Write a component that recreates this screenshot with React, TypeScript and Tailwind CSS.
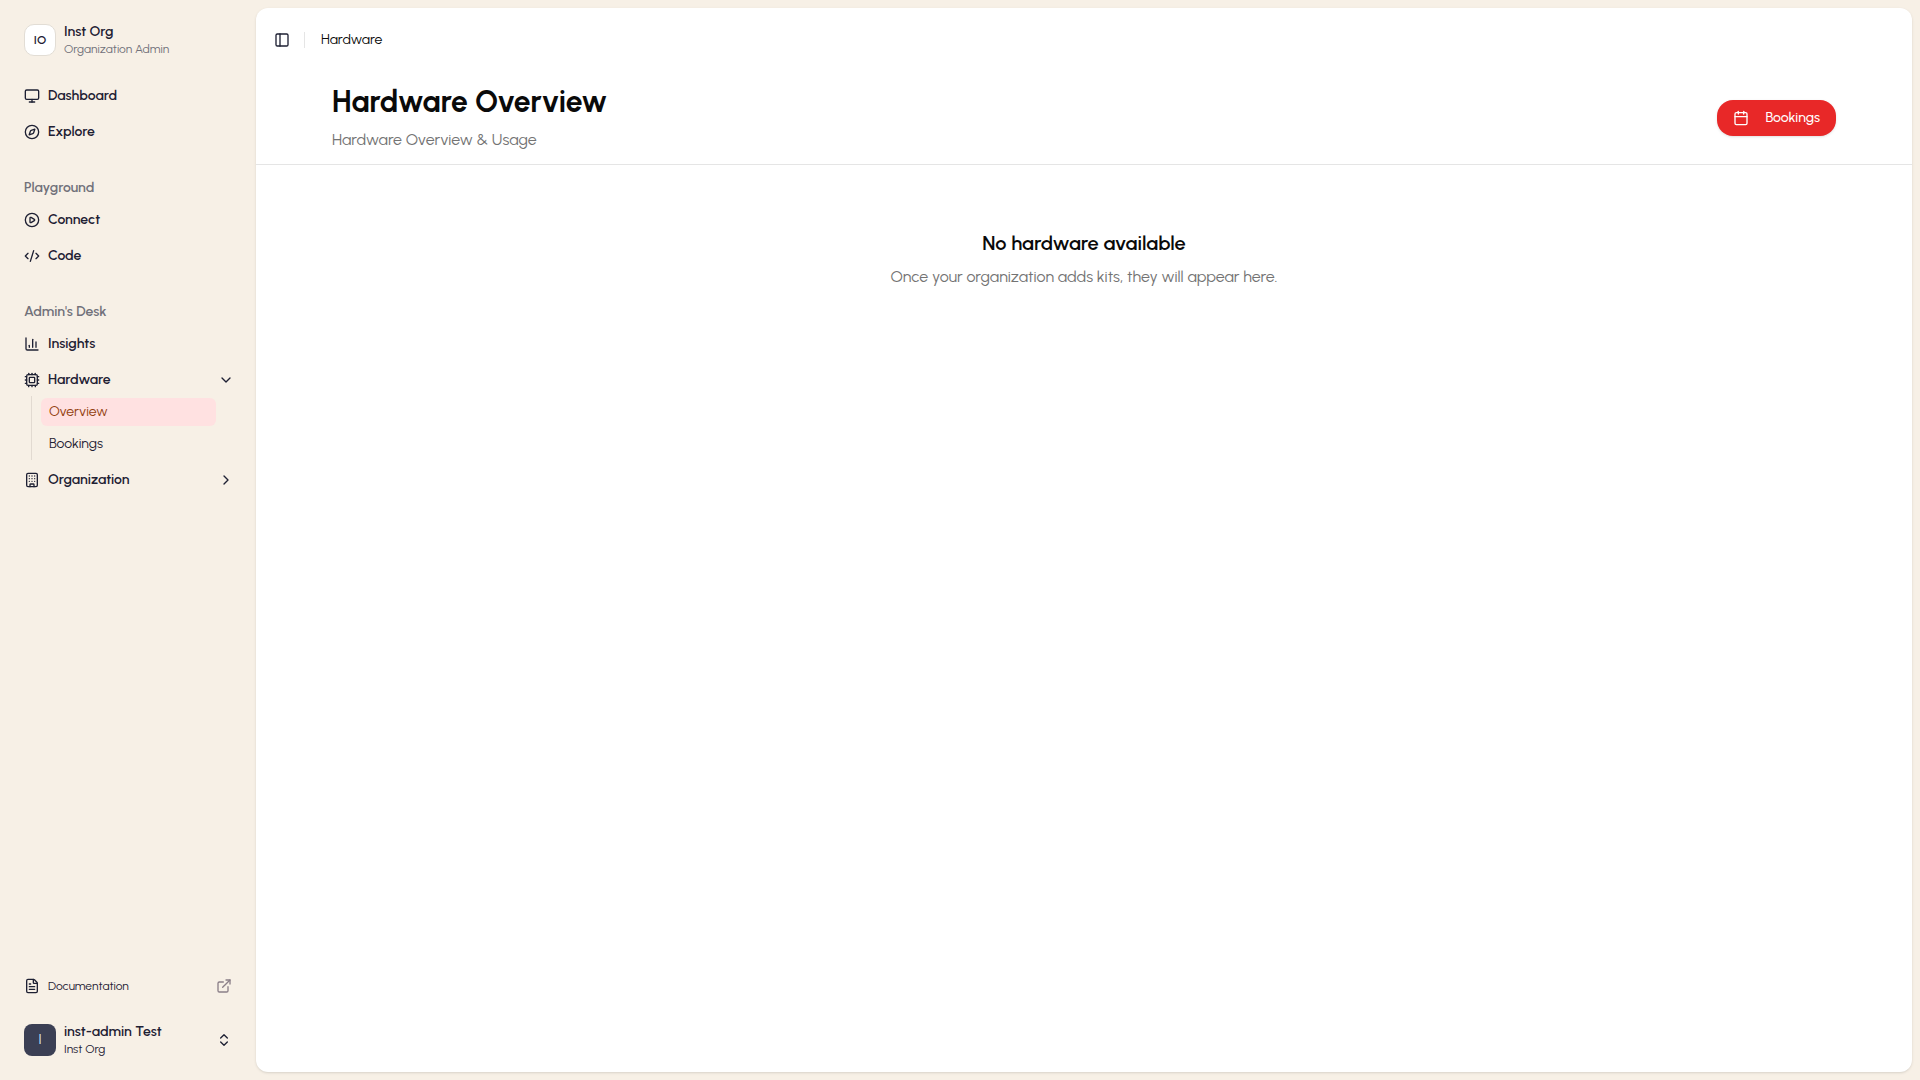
import { useState } from "react";
import {
  Building,
  Calendar,
  ChartColumn,
  ChevronRight,
  ChevronsUpDown,
  CirclePlay,
  CodeXml,
  Compass,
  Cpu,
  ExternalLink,
  FileText,
  Monitor,
  PanelLeft,
  type LucideIcon,
} from "lucide-react";

type NavLinkProps = {
  readonly icon: LucideIcon;
  readonly label: string;
};

type NavSectionProps = {
  readonly icon: LucideIcon;
  readonly label: string;
  readonly items: readonly string[];
  readonly active?: string;
  readonly defaultOpen?: boolean;
};

const NavLink = ({ icon: Icon, label }: NavLinkProps) => (
  <li>
    <a href="#" className="flex h-8 items-center gap-2 rounded-md px-2 font-semibold hover:bg-black/5">
      <Icon className="size-4 shrink-0" />
      <span>{label}</span>
    </a>
  </li>
);

const NavSection = ({ icon: Icon, label, items, active, defaultOpen = false }: NavSectionProps) => {
  const [isOpen, setIsOpen] = useState(defaultOpen);

  return (
    <li>
      <button
        type="button"
        aria-expanded={isOpen}
        onClick={() => setIsOpen((prev) => !prev)}
        className="flex h-8 w-full items-center gap-2 rounded-md px-2 text-left font-semibold hover:bg-black/5"
      >
        <Icon className="size-4 shrink-0" />
        <span className="flex-1">{label}</span>
        <ChevronRight className={`-mr-0.5 size-4 shrink-0 transition-transform ${isOpen ? "rotate-90" : ""}`} />
      </button>
      {isOpen && (
        <ul className="ml-[15px] mr-6 flex flex-col gap-1 border-l border-[#e2dad1] py-0.5 pl-[9px]">
          {items.map((item) => (
            <li key={item}>
              <a
                href="#"
                className={`flex h-7 items-center rounded-md px-2 ${
                  item === active ? "bg-[#ffe1e1] text-[#92400e]" : "hover:bg-black/5"
                }`}
              >
                {item}
              </a>
            </li>
          ))}
        </ul>
      )}
    </li>
  );
};

const GroupLabel = ({ children }: { readonly children: string }) => (
  <h2 className="flex h-8 items-center px-2 font-semibold text-[#71717a]">{children}</h2>
);

const Sidebar = () => (
  <aside className="flex w-64 shrink-0 flex-col p-2 text-sm text-[#1e2033]">
    {/* Organization */}
    <div className="p-2">
      <button type="button" className="flex h-12 w-full items-center gap-2 rounded-md px-2 text-left">
        <span className="flex size-8 shrink-0 items-center justify-center rounded-[10px] border border-[#e2ddd5] bg-white text-xs font-semibold">
          IO
        </span>
        <span className="flex flex-col">
          <span className="text-sm leading-[18px] font-semibold">Inst Org</span>
          <span className="text-xs leading-4 text-[#71717a]">Organization Admin</span>
        </span>
      </button>
    </div>

    {/* Navigation */}
    <nav className="flex flex-1 flex-col gap-2">
      <ul className="flex flex-col gap-1 p-2">
        <NavLink icon={Monitor} label="Dashboard" />
        <NavLink icon={Compass} label="Explore" />
      </ul>
      <div className="p-2">
        <GroupLabel>Playground</GroupLabel>
        <ul className="flex flex-col gap-1">
          <NavLink icon={CirclePlay} label="Connect" />
          <NavLink icon={CodeXml} label="Code" />
        </ul>
      </div>
      <div className="p-2">
        <GroupLabel>Admin's Desk</GroupLabel>
        <ul className="flex flex-col gap-1">
          <NavLink icon={ChartColumn} label="Insights" />
          <NavSection
            icon={Cpu}
            label="Hardware"
            items={["Overview", "Bookings"]}
            active="Overview"
            defaultOpen
          />
          <NavSection icon={Building} label="Organization" items={["Members", "Settings"]} />
        </ul>
      </div>
    </nav>

    {/* Footer */}
    <div className="p-2">
      <a href="#" className="flex h-7 items-center gap-2 rounded-md px-2 text-xs hover:bg-black/5">
        <FileText className="size-4 shrink-0" />
        <span className="flex-1">Documentation</span>
        <ExternalLink className="size-4 shrink-0 text-[#8b7f88]" />
      </a>
    </div>
    <div className="p-2">
      <button type="button" className="flex h-12 w-full items-center gap-2 rounded-md px-2 text-left">
        <span className="flex size-8 shrink-0 items-center justify-center rounded-lg bg-[#3b3f54] text-sm text-[#dbeafe]">
          I
        </span>
        <span className="flex flex-1 flex-col">
          <span className="text-sm leading-[18px] font-semibold">inst-admin Test</span>
          <span className="text-xs leading-4">Inst Org</span>
        </span>
        <ChevronsUpDown className="size-4 shrink-0" />
      </button>
    </div>
  </aside>
);

export default function App() {
  const [isSidebarOpen, setIsSidebarOpen] = useState(true);

  return (
    <div className="flex min-h-screen bg-[#f7f0e6] font-['Urbanist','Lato',sans-serif] text-[#0a0a0a]">
      {isSidebarOpen && <Sidebar />}

      <main className={`my-2 mr-2 flex-1 rounded-xl bg-white shadow-sm ${isSidebarOpen ? "" : "ml-2"}`}>
        <header className="flex h-16 items-center gap-2 px-3">
          <button
            type="button"
            aria-label="Toggle Sidebar"
            onClick={() => setIsSidebarOpen((prev) => !prev)}
            className="flex size-7 items-center justify-center rounded-md text-[#1e2033] hover:bg-black/5"
          >
            <PanelLeft className="size-4" />
          </button>
          <div className="mr-2 h-4 w-px bg-[#e5e5e5]" />
          <nav aria-label="Breadcrumb" className="text-sm">
            Hardware
          </nav>
        </header>

        {/* Page heading */}
        <div className="border-b border-[#e5e5e5]">
          <div className="mx-auto flex max-w-[1536px] items-center justify-between px-4 py-3">
            <div className="flex flex-col gap-2">
              <h1 className="text-3xl leading-9 font-bold">Hardware Overview</h1>
              <p className="text-base text-[#737373]">Hardware Overview &amp; Usage</p>
            </div>
            <button
              type="button"
              className="flex h-9 items-center gap-4 rounded-2xl bg-[#e82828] px-4 text-sm font-medium text-white shadow-sm hover:bg-[#d32020]"
            >
              <Calendar className="size-4" />
              Bookings
            </button>
          </div>
        </div>

        {/* Empty state */}
        <div className="flex flex-col items-center gap-2 px-4 py-16 text-center">
          <h2 className="text-xl leading-7 font-semibold">No hardware available</h2>
          <p className="text-base text-[#737373]">Once your organization adds kits, they will appear here.</p>
        </div>
      </main>
    </div>
  );
}
